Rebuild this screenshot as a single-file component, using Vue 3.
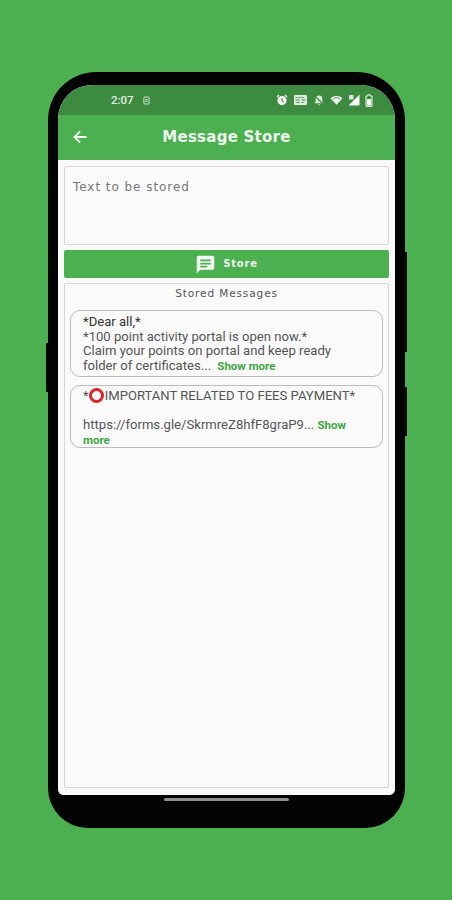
<script setup>
const messages = [
  { id: 1, lines: ['*Dear all,*', '*100 point activity portal is open now.*', 'Claim your points on portal and keep ready', 'folder of certificates...'] },
  { id: 2 }
]
</script>

<template>
  <div class="page">
    <div class="phone">
      <i class="side-btn left-btn"></i>
      <i class="side-btn right-btn-a"></i>
      <i class="side-btn right-btn-b"></i>
      <div class="screen">
        <div class="status">
          <div class="status-left">
            <span class="time">2:07</span>
            <svg class="sim" viewBox="0 0 8 10" width="7" height="9"><rect x="1" y="1" width="6" height="8" rx="1" fill="none" stroke="#d5e6d5" stroke-width="1.1"/><path d="M2.5 4h3M2.5 6h3" stroke="#d5e6d5" stroke-width="1"/></svg>
          </div>
          <div class="status-right">
            <svg viewBox="0 0 12 12" width="12" height="12"><circle cx="6" cy="6.6" r="4.6" fill="#f2f7f2"/><path d="M1 3 3 1M11 3 9 1" stroke="#f2f7f2" stroke-width="1.3"/><path d="M6 4v3l2 1" stroke="#3d8b40" stroke-width="1" fill="none"/></svg>
            <svg viewBox="0 0 14 12" width="15" height="12"><rect x="0.5" y="1" width="13" height="10" rx="1" fill="#dfeadf"/><path d="M2 3.5h2M5 3.5h2M8 3.5h2M2 6h4M8 6h4M3 8.5h3M8 8.5h2" stroke="#3d8b40" stroke-width="1"/></svg>
            <svg viewBox="0 0 12 12" width="12" height="12"><path d="M6 1.5a3.3 3.3 0 0 1 3.3 3.3v3l1.4 1.5H1.3l1.4-1.5v-3A3.3 3.3 0 0 1 6 1.5zM4.8 10.2h2.4L6 11.5z" fill="#dfeadf"/><path d="M1.5 1.5l9 9" stroke="#3d8b40" stroke-width="1.2"/></svg>
            <svg viewBox="0 0 14 12" width="13" height="12"><path d="M0.5 4.2a9.5 9.5 0 0 1 13 0L7 11z" fill="#f2f7f2"/><path d="M3.2 5.2a5.6 5.6 0 0 1 7.6 0" stroke="#3d8b40" stroke-width="1" fill="none"/></svg>
            <svg viewBox="0 0 12 12" width="12" height="12"><path d="M11.5 0.5v11H0.5z" fill="#f6faf6"/><path d="M1 1h4.5v4.5H1z" fill="#f6faf6" opacity=".85"/></svg>
            <svg viewBox="0 0 8 13" width="8" height="13"><path d="M2.8.8h2.4v1.2H7v10.4H1V2h1.8z" fill="none" stroke="#f2f7f2" stroke-width="1"/><rect x="1.8" y="5" width="4.4" height="6.6" fill="#f2f7f2"/></svg>
          </div>
        </div>
        <header class="appbar">
          <svg class="back" viewBox="0 0 14 14" width="14" height="14"><path d="M13.5 7H2M7 1.5 1.5 7 7 12.5" fill="none" stroke="#f4faf4" stroke-width="1.8"/></svg>
          <h1 class="title">Message Store</h1>
        </header>
        <main class="body">
          <div class="input">Text to be stored</div>
          <button class="store">
            <svg viewBox="0 0 24 24" width="21" height="21"><path d="M4 3h16a2 2 0 0 1 2 2v12a2 2 0 0 1-2 2H6l-4 4V5a2 2 0 0 1 2-2zm2 4.5v2h12v-2zm0 3.5v2h12v-2zm0 3.5v2h8v-2z" fill="#f2f9f2" fill-rule="evenodd"/></svg>
            <span>Store</span>
          </button>
          <section class="stored">
            <h2 class="stored-title">Stored Messages</h2>
            <article class="msg first">
              <div v-for="line in messages[0].lines.slice(0, 3)" :key="line">{{ line }}</div>
              <div>{{ messages[0].lines[3] }} <b class="more">Show more</b></div>
            </article>
            <article class="msg second">
              <div>*<span class="ring"></span>IMPORTANT RELATED TO FEES PAYMENT*</div>
              <div class="blank"></div>
              <div>https://forms.gle/SkrmreZ8hfF8graP9... <b class="more">Show</b> <b class="more">more</b></div>
            </article>
          </section>
        </main>
      </div>
      <div class="home-bar"></div>
    </div>
  </div>
</template>

<style scoped>
.page {
  width: 452px;
  height: 900px;
  box-sizing: border-box;
  padding: 72px 47px 72px 48px;
  background: #4caf50;
}
.phone {
  position: relative;
  width: 357px;
  height: 756px;
  box-sizing: border-box;
  padding: 13px 10px 0;
  background: #030303;
  border-radius: 48px 48px 40px 40px;
}
.side-btn {
  position: absolute;
  width: 2px;
  background: #0a0a0a;
}
.left-btn { left: -2px; top: 271px; height: 49px; border-radius: 1px 0 0 1px; }
.right-btn-a { right: -2px; top: 180px; height: 100px; }
.right-btn-b { right: -2px; top: 315px; height: 49px; }
.screen {
  height: 710px;
  display: flex;
  flex-direction: column;
  background: #fff;
  border-radius: 34px 34px 6px 6px;
  overflow: hidden;
}
.status {
  height: 30px;
  flex: none;
  display: flex;
  align-items: center;
  justify-content: space-between;
  padding: 0 22px 0 53px;
  background: #3d8b40;
  color: #e3efe3;
}
.status-left, .status-right { display: flex; align-items: center; }
.status-left { gap: 9px; }
.status-right { gap: 5px; }
.time { font: 500 11.5px "Roboto", sans-serif; }
.appbar {
  height: 45px;
  flex: none;
  position: relative;
  display: flex;
  align-items: center;
  justify-content: center;
  background: #4caf50;
}
.back { position: absolute; left: 15px; top: 15px; }
.title {
  margin: -2px 0 0;
  font: 700 15px "DejaVu Sans", sans-serif;
  letter-spacing: 0.25px;
  color: #eef7ee;
}
.body {
  flex: 1;
  display: flex;
  flex-direction: column;
  gap: 5px;
  padding: 6px 6px 7px;
  background: #fafafa;
}
.input {
  height: 79px;
  flex: none;
  box-sizing: border-box;
  padding: 12px 8px;
  border: 1px solid #d6d6d6;
  border-radius: 2px;
  font: 12px/16px "DejaVu Sans", sans-serif;
  letter-spacing: 0.95px;
  color: #777;
}
.store {
  height: 28px;
  flex: none;
  display: flex;
  align-items: center;
  justify-content: center;
  gap: 7px;
  padding: 0 0 2px;
  border: 0;
  border-radius: 2px;
  background: #4caf50;
  color: #eef7ee;
  font: 700 10px "DejaVu Sans", sans-serif;
  letter-spacing: 0.8px;
}
.stored {
  flex: 1;
  box-sizing: border-box;
  padding: 0 5px;
  border: 1px solid #d6d6d6;
  border-radius: 2px;
}
.stored-title {
  margin: 2px 0 10px;
  height: 14px;
  text-align: center;
  font: 400 10.5px/14px "DejaVu Sans", sans-serif;
  letter-spacing: 0.9px;
  color: #555;
}
.msg {
  box-sizing: border-box;
  padding: 0 17px 0 12px;
  border: 1px solid #bdbdbd;
  border-radius: 10px;
  font: 13.1px/14.7px "Roboto", sans-serif;
  color: #555;
}
.first { height: 67px; padding-top: 4px; margin-bottom: 8px; }
.first div:first-child { color: #333; }
.first .more { margin-left: 3px; }
.second { height: 63px; padding-top: 2px; }
.blank { height: 14.7px; }
.more {
  font-size: 11.5px;
  font-weight: 700;
  color: #3fa544;
}
.ring {
  display: inline-block;
  box-sizing: border-box;
  width: 15px;
  height: 15px;
  margin: 0 1px 0 0;
  vertical-align: -3px;
  border: 3px solid #d9262c;
  border-radius: 50%;
}
.home-bar {
  width: 125px;
  height: 3px;
  margin: 3px auto 0;
  background: #8e8e8e;
  border-radius: 2px;
}
</style>
